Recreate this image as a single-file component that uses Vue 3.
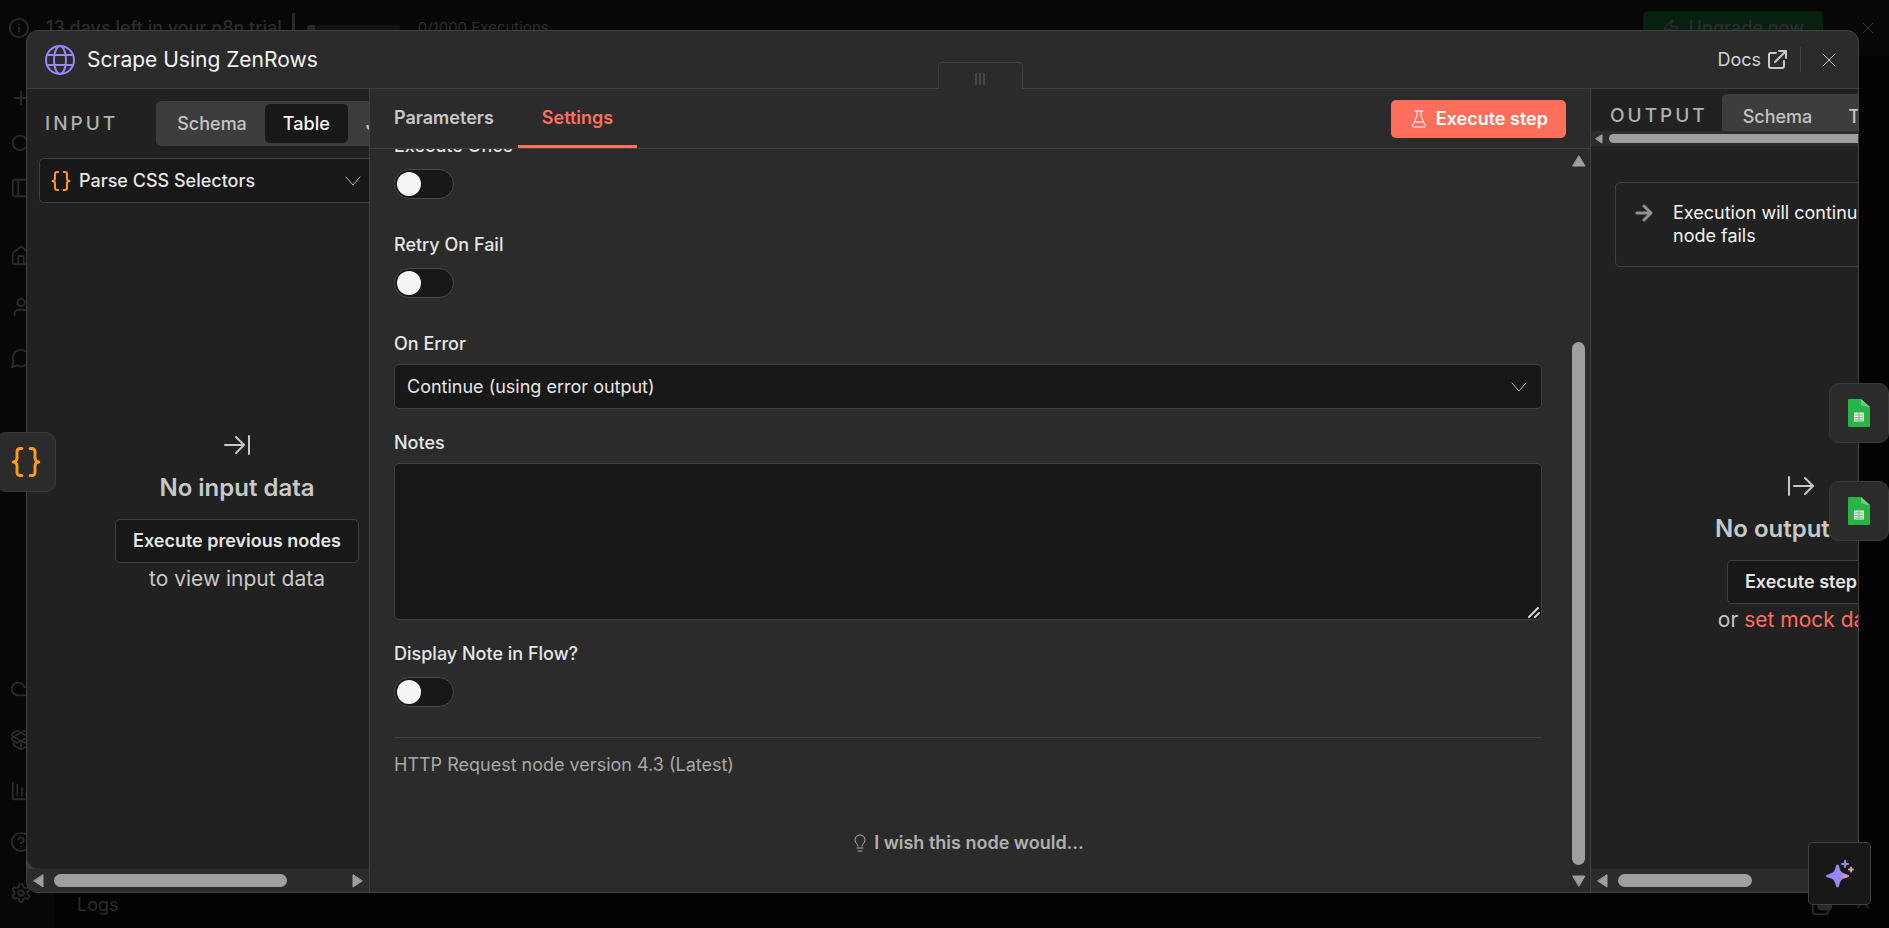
<script setup>
import { ref } from 'vue'

const executeOnce = ref(false)
const retryOnFail = ref(false)
const displayNote = ref(false)
const notes = ref('')

const sideTop = [
  ['M5 12h14', 'M12 5v14'],
  ['M3 12a8 8 0 1 0 16 0a8 8 0 1 0-16 0', 'm21 21-4-4'],
  ['M5 3h14a2 2 0 0 1 2 2v14a2 2 0 0 1-2 2H5a2 2 0 0 1-2-2V5a2 2 0 0 1 2-2', 'M9 3v18'],
]
const sideMid = [
  ['M15 21v-8a1 1 0 0 0-1-1h-4a1 1 0 0 0-1 1v8', 'M3 10a2 2 0 0 1 .7-1.5l7-6a2 2 0 0 1 2.6 0l7 6A2 2 0 0 1 21 10v9a2 2 0 0 1-2 2H5a2 2 0 0 1-2-2z'],
  ['M19 21v-2a4 4 0 0 0-4-4H9a4 4 0 0 0-4 4v2', 'M8 7a4 4 0 1 0 8 0a4 4 0 1 0-8 0'],
  ['M7.9 20A9 9 0 1 0 4 16.1L2 22Z'],
]
const sideLow = [
  ['M17.5 19H9a7 7 0 1 1 6.7-9h1.8a4.5 4.5 0 1 1 0 9Z'],
  ['M12 22v-9', 'M15.2 2.2a1.7 1.7 0 0 1 1.6 0L21 4.6a1.9 1.9 0 0 1 0 3.3L8.8 14.8a1.9 1.9 0 0 1-1.7 0L3 12.4a1.9 1.9 0 0 1 0-3.3z', 'M20 13v3.9a2 2 0 0 1-1 1.7l-6 3.2a2 2 0 0 1-1.9 0l-6-3.2a2 2 0 0 1-1.1-1.7V13', 'M21 12.4a1.9 1.9 0 0 0 0-3.3L8.9 2.2a1.9 1.9 0 0 0-1.7 0L3 4.6a1.9 1.9 0 0 0 0 3.3l12.2 6.9a1.9 1.9 0 0 0 1.7 0z'],
  ['M3 3v16a2 2 0 0 0 2 2h16', 'M8 5v12', 'M13 9v8', 'M18 13v4'],
  ['M2 12a10 10 0 1 0 20 0a10 10 0 1 0-20 0', 'M9.1 9a3 3 0 0 1 5.8 1c0 2-3 3-3 3', 'M12 17h.01'],
  ['M12.2 2h-.4a2 2 0 0 0-2 2v.2a2 2 0 0 1-1 1.7l-.5.3a2 2 0 0 1-2 0l-.1-.1a2 2 0 0 0-2.7.7l-.3.4a2 2 0 0 0 .8 2.7l.1.1a2 2 0 0 1 1 1.7v.5a2 2 0 0 1-1 1.8l-.1.1a2 2 0 0 0-.8 2.7l.3.4a2 2 0 0 0 2.7.7l.1-.1a2 2 0 0 1 2 0l.5.3a2 2 0 0 1 1 1.7v.2a2 2 0 0 0 2 2h.4a2 2 0 0 0 2-2v-.2a2 2 0 0 1 1-1.7l.5-.3a2 2 0 0 1 2 0l.1.1a2 2 0 0 0 2.7-.7l.3-.4a2 2 0 0 0-.8-2.7l-.1-.1a2 2 0 0 1-1-1.7v-.5a2 2 0 0 1 1-1.8l.1-.1a2 2 0 0 0 .8-2.7l-.3-.4a2 2 0 0 0-2.7-.7l-.1.1a2 2 0 0 1-2 0l-.5-.3a2 2 0 0 1-1-1.7V4a2 2 0 0 0-2-2z', 'M9 12a3 3 0 1 0 6 0a3 3 0 1 0-6 0'],
]
const bracePaths = [
  'M9.2 3H8a2 2 0 0 0-2 2v4.500a2.500 2.500 0 0 1-2.500 2.500a2.500 2.500 0 0 1 2.500 2.500v4.500a2 2 0 0 0 2 2h1.200',
  'M14.8 21H16a2 2 0 0 0 2-2v-4.500a2.500 2.500 0 0 1 2.500-2.500a2.500 2.500 0 0 1-2.500-2.500V5a2 2 0 0 0-2-2h-1.200',
]
</script>

<template>
  <div class="page">
    <header class="banner">
      <svg class="ico info" viewBox="0 0 24 24"><circle cx="12" cy="12" r="10" /><path d="M12 16v-4M12 8h.01" /></svg>
      <span class="trial">13 days left in your n8n trial</span>
      <span class="bar"></span>
      <span class="meter"></span>
      <span class="execs">0/1000 Executions</span>
      <button class="upgrade" type="button">
        <svg class="ico" viewBox="0 0 24 24"><path d="M4 14a1 1 0 0 1-.8-1.6l9.9-10.2a.5.5 0 0 1 .9.5l-2 6A1 1 0 0 0 13 10h7a1 1 0 0 1 .8 1.6l-9.9 10.2a.5.5 0 0 1-.9-.5l2-6A1 1 0 0 0 11 14z" /></svg>
        Upgrade now
      </button>
      <button class="banner-close" type="button" aria-label="Dismiss banner">
        <svg class="ico" viewBox="0 0 24 24"><path d="M2 2l20 20M22 2L2 22" /></svg>
      </button>
    </header>
    <div class="below">
      <nav class="sidebar">
        <div class="group top">
          <svg v-for="(p, i) in sideTop" :key="i" class="ico" viewBox="0 0 24 24"><path v-for="d in p" :key="d" :d="d" /></svg>
        </div>
        <div class="group mid">
          <svg v-for="(p, i) in sideMid" :key="i" class="ico" viewBox="0 0 24 24"><path v-for="d in p" :key="d" :d="d" /></svg>
        </div>
        <div class="group low">
          <svg v-for="(p, i) in sideLow" :key="i" class="ico" viewBox="0 0 24 24"><path v-for="d in p" :key="d" :d="d" /></svg>
        </div>
      </nav>
      <div class="canvas">
        <footer class="logs">
          <span>Logs</span>
          <svg class="ico pop" viewBox="0 0 24 24"><rect x="2" y="6" width="17" height="16" rx="3" /><rect x="8" y="3" width="14" height="14" rx="3" fill="#2a2a2a" /></svg>
          <svg class="ico up" viewBox="0 0 24 24"><path d="M4 16l8-8 8 8" /></svg>
        </footer>
      </div>
    </div>

    <section class="modal" role="dialog" aria-label="Scrape Using ZenRows">
      <header class="head">
        <svg class="globe" viewBox="0 0 30 30"><circle cx="15" cy="15" r="14" /><ellipse cx="15" cy="15" rx="6" ry="14" /><path d="M2 10h26M2 20h26" /></svg>
        <h1>Scrape Using ZenRows</h1>
        <a class="docs" href="#">Docs
          <svg viewBox="0 0 20 20"><path d="M9 3H4a2 2 0 0 0-2 2v11a2 2 0 0 0 2 2h11a2 2 0 0 0 2-2v-5M12 1h7v7M19 1L8 12" /></svg>
        </a>
        <span class="split"></span>
        <button class="close" type="button" aria-label="Close">
          <svg viewBox="0 0 14 14"><path d="M1 1l12 12M13 1L1 13" /></svg>
        </button>
        <div class="handle"><i></i><i></i><i></i></div>
      </header>

      <div class="body">
        <aside class="side input">
          <div class="side-view">
            <div class="side-head">
              <h2>INPUT</h2>
              <div class="seg">
                <button type="button">Schema</button>
                <button type="button" class="on">Table</button>
                <button type="button">JSON</button>
              </div>
            </div>
            <div class="node-pick">
              <svg class="braces" viewBox="0 0 24 24"><path v-for="d in bracePaths" :key="d" :d="d" /></svg>
              <select aria-label="Input node"><option>Parse CSS Selectors</option></select>
              <svg class="chev" viewBox="0 0 16 10"><path d="M1 1l7 8 7-8" /></svg>
            </div>
            <div class="empty">
              <svg viewBox="0 0 26 20"><path d="M1 10h19M12 2l8 8-8 8M25 1v18" /></svg>
              <h3>No input data</h3>
              <button type="button">Execute previous nodes</button>
              <p>to view input data</p>
            </div>
          </div>
          <div class="hbar">
            <svg class="arr" viewBox="0 0 11 14"><path d="M10 1v12L1 7z" /></svg>
            <span class="track"><span class="thumb in"></span></span>
            <svg class="arr" viewBox="0 0 11 14"><path d="M1 1v12l9-6z" /></svg>
          </div>
        </aside>

        <main class="main">
          <div class="tabs">
            <button type="button" class="tab">Parameters</button>
            <button type="button" class="tab active">Settings</button>
            <button type="button" class="run">
              <svg viewBox="0 0 16 18"><path d="M4 1h8M6 1v5L2 15a1 1 0 0 0 1 2h10a1 1 0 0 0 1-2L10 6V1M4 12h8" /></svg>
              Execute step
            </button>
          </div>
          <div class="scroller">
            <form class="form" @submit.prevent>
              <div class="field">
                <label for="once">Execute Once</label>
                <input id="once" v-model="executeOnce" type="checkbox" class="toggle" />
              </div>
              <div class="field">
                <label for="retry">Retry On Fail</label>
                <input id="retry" v-model="retryOnFail" type="checkbox" class="toggle" />
              </div>
              <div class="field">
                <label for="onerror">On Error</label>
                <div class="select">
                  <select id="onerror"><option>Continue (using error output)</option></select>
                  <svg class="chev" viewBox="0 0 16 10"><path d="M1 1l7 8 7-8" /></svg>
                </div>
              </div>
              <div class="field">
                <label for="notes">Notes</label>
                <div class="area">
                  <textarea id="notes" v-model="notes"></textarea>
                  <svg class="grip" viewBox="0 0 12 12"><path d="M1 11L10 2M7 11l4-4" /></svg>
                </div>
              </div>
              <div class="field">
                <label for="display">Display Note in Flow?</label>
                <input id="display" v-model="displayNote" type="checkbox" class="toggle" />
              </div>
              <p class="version">HTTP Request node version 4.3 (Latest)</p>
              <a class="wish" href="#">
                <svg viewBox="0 0 12 18"><path d="M4 12c0-2-3-3-3-6a5 5 0 0 1 10 0c0 3-3 4-3 6M3 14h6M4 17h4" /></svg>
                I wish this node would...
              </a>
            </form>
            <div class="vbar">
              <svg viewBox="0 0 16 12"><path d="M2 11h12L8 1z" /></svg>
              <span class="vtrack"><span class="vthumb"></span></span>
              <svg viewBox="0 0 16 12"><path d="M2 1h12L8 11z" /></svg>
            </div>
          </div>
        </main>

        <aside class="side output">
          <div class="side-view">
            <div class="side-head">
              <h2>OUTPUT</h2>
              <div class="seg">
                <button type="button">Schema</button>
                <button type="button">Table</button>
                <button type="button">JSON</button>
              </div>
            </div>
            <div class="minibar">
              <svg viewBox="0 0 8 10"><path d="M7 1v8L1 5z" /></svg>
              <span></span>
            </div>
            <div class="notice">
              <svg viewBox="0 0 18 18"><path d="M2 9h14M9 2l7 7-7 7" /></svg>
              <p>Execution will continue even if the node fails</p>
            </div>
            <div class="empty">
              <svg viewBox="0 0 26 20"><path d="M1 1v18M6 10h19M17 2l8 8-8 8" /></svg>
              <h3>No output data</h3>
              <button type="button">Execute step</button>
              <p>or <a href="#">set mock data</a></p>
            </div>
          </div>
          <div class="hbar">
            <svg class="arr" viewBox="0 0 11 14"><path d="M10 1v12L1 7z" /></svg>
            <span class="track"><span class="thumb out"></span></span>
            <svg class="arr" viewBox="0 0 11 14"><path d="M1 1v12l9-6z" /></svg>
          </div>
        </aside>
      </div>
    </section>

    <button class="float prev" type="button" aria-label="Parse CSS Selectors">
      <svg class="braces" viewBox="0 0 24 24"><path v-for="d in bracePaths" :key="d" :d="d" /></svg>
    </button>
    <div class="next">
      <button v-for="n in 2" :key="n" class="float" type="button" :aria-label="'Google Sheets ' + n">
        <svg class="sheet" viewBox="0 0 22 28">
          <path fill="#28b446" d="M1 0h12l9 8v19a1 1 0 0 1-1 1H1a1 1 0 0 1-1-1V1a1 1 0 0 1 1-1z" />
          <path fill="#6ace7c" d="M13 0l9 8v1l-3-1-6-2z" />
          <path fill="#219b3a" d="M19 8h3v1z" />
          <path fill="#e4e7e6" d="M6 13.500h10v9H6z" />
          <path stroke="#6cc47d" stroke-linecap="butt" d="M7 16h8M7 18.500h8M7 21h8M11 14v8" />
        </svg>
      </button>
    </div>
    <button class="ai" type="button" aria-label="Ask assistant">
      <svg viewBox="0 0 28 28">
        <path fill="#9b85f5" d="M11.500 4.500c1 0 1.400.8 1.700 2 1 4.500 2 6 6.300 7.400 2.400.8 3.500 1.100 3.500 2.100s-1.100 1.300-3.500 2.100c-4.300 1.400-5.300 2.900-6.300 7.400-.3 1.200-.7 2-1.700 2s-1.400-.8-1.700-2c-1-4.500-2-6-6.300-7.400C1.100 17.300 0 17 0 16s1.100-1.300 3.500-2.100c4.300-1.400 5.300-2.900 6.300-7.400.3-1.200.7-2 1.700-2z" />
        <path fill="#e58bb0" d="M16.500 14.500l3.500.2c2 .6 3 .8 3 1.300s-1 .9-3 1.500l-3.500.7z" />
        <path stroke="#9b85f5" stroke-width="2" d="M19 1v6M16 4h6" />
        <path stroke="#d3a5ac" stroke-width="2" d="M25 7.500v4M23 9.500h4" />
      </svg>
    </button>
  </div>
</template>

<style>
html,
body,
#app {
  height: 100%;
  margin: 0;
  background: #030303;
}
</style>

<style scoped>
* {
  box-sizing: border-box;
}
.page {
  position: relative;
  display: flex;
  flex-direction: column;
  height: 100vh;
  overflow: hidden;
  background: #030303;
  color: #e6e6e6;
  font-family: Inter, "Liberation Sans", sans-serif;
  font-size: 18px;
  line-height: 24px;
}
button,
select,
textarea {
  padding: 0;
  border: 0;
  background: none;
  color: inherit;
  font: inherit;
}
h1,
h2,
h3,
p {
  margin: 0;
}
a {
  text-decoration: none;
}
svg {
  flex: none;
  fill: none;
  stroke-linecap: round;
  stroke-linejoin: round;
}
select {
  appearance: none;
  flex: 1;
  min-width: 0;
  outline: 0;
}

/* dimmed application behind the dialog */
.ico {
  width: 22px;
  height: 22px;
  stroke: #2a2a2a;
  stroke-width: 2;
}
.banner {
  display: flex;
  flex: none;
  align-items: center;
  height: 56px;
  padding: 0 15px 0 8px;
  background: #070707;
  color: #2d2d2d;
}
.trial {
  margin-left: 16px;
  font-weight: 500;
}
.bar {
  width: 3px;
  height: 30px;
  margin-left: 10px;
  background: #2a2a2a;
}
.meter {
  width: 93px;
  height: 6px;
  margin: 0 18px 0 12px;
  border-radius: 3px;
  background: linear-gradient(90deg, #2a2a2a 8px, #121212 8px);
}
.execs {
  font-size: 15px;
}
.upgrade {
  display: flex;
  align-items: center;
  gap: 8px;
  height: 34px;
  margin-left: auto;
  padding: 0 19px;
  border-radius: 5px;
  background: #08200f;
  font-weight: 500;
}
.upgrade .ico {
  width: 18px;
  height: 18px;
}
.banner-close {
  display: flex;
  margin-left: 39px;
}
.banner-close .ico {
  width: 12px;
  height: 12px;
  stroke: #3a3a3a;
}
.below {
  display: flex;
  flex: 1;
  min-height: 0;
}
.sidebar {
  display: flex;
  flex-direction: column;
  width: 54px;
  padding: 31px 0 24px 10px;
  background: #070707;
}
.group {
  display: flex;
  flex-direction: column;
}
.top {
  gap: 23px;
}
.mid {
  gap: 29px;
  margin-top: 46px;
}
.low {
  gap: 29px;
  margin-top: auto;
}
.canvas {
  display: flex;
  flex: 1;
  flex-direction: column;
  justify-content: flex-end;
}
.logs {
  display: flex;
  align-items: center;
  height: 46px;
  padding: 0 18px 0 23px;
  color: #2d2d2d;
}
.pop {
  margin-left: auto;
}
.up {
  width: 16px;
  height: 16px;
  margin-left: 22px;
}

/* dialog */
.modal {
  position: absolute;
  inset: 30px 30px 35px 26px;
  display: flex;
  flex-direction: column;
  overflow: hidden;
  border: 1px solid #414141;
  border-radius: 12px;
  background: #2b2b2b;
}
.head {
  position: relative;
  display: flex;
  flex: none;
  align-items: center;
  height: 58px;
  padding: 0 22px 0 18px;
  border-bottom: 1px solid #414141;
}
.globe {
  width: 30px;
  height: 30px;
  stroke: #9b85f5;
  stroke-width: 2;
}
h1 {
  margin-left: 12px;
  color: #f5f5f5;
  font-size: 21px;
  font-weight: 400;
}
.docs {
  display: flex;
  align-items: center;
  gap: 6px;
  margin-left: auto;
  color: #d6d6d6;
}
.docs svg {
  width: 20px;
  height: 20px;
  stroke: #c8c8c8;
  stroke-width: 2;
}
.split {
  width: 1px;
  height: 25px;
  margin: 0 21px 0 13px;
  background: #414141;
}
.close {
  display: flex;
}
.close svg {
  width: 14px;
  height: 14px;
  stroke: #c8c8c8;
  stroke-width: 1;
}
.handle {
  position: absolute;
  top: 31px;
  left: calc(50% - 5px);
  display: flex;
  justify-content: center;
  gap: 2px;
  width: 85px;
  height: 27px;
  padding-top: 10px;
  border: 1px solid #414141;
  border-bottom: 0;
  border-radius: 5px 5px 0 0;
  background: #2b2b2b;
}
.handle i {
  width: 2px;
  height: 12px;
  background: #4a4545;
}
.body {
  display: flex;
  flex: 1;
  min-height: 0;
}

.side {
  display: flex;
  flex: none;
  flex-direction: column;
  overflow: hidden;
  background: #3c3c3c;
}
.input {
  width: 343px;
  border-right: 1px solid #414141;
}
.output {
  width: 268px;
  border-left: 1px solid #414141;
}
.side-view {
  display: flex;
  flex: 1;
  flex-direction: column;
  width: 420px;
  min-height: 0;
  background: #212121;
}
.input .side-view {
  border-radius: 0 0 0 12px;
}
.side-head {
  display: flex;
  flex: none;
  align-items: center;
}
.input .side-head {
  padding: 12px 0 12px 18px;
}
.output .side-head {
  height: 42px;
  padding-left: 19px;
  overflow: hidden;
}
h2 {
  color: #b0b0b0;
  font-size: 19px;
  font-weight: 500;
  letter-spacing: 3px;
}
.output h2 {
  margin-top: 11px;
}
.seg {
  display: flex;
  flex: none;
  gap: 0;
  height: 45px;
  margin-left: 38px;
  padding: 3px;
  border-radius: 5px;
  background: #3d3d3d;
}
.output .seg {
  align-self: flex-start;
  margin: 5px 0 0 14px;
}
.seg button {
  height: 39px;
  padding: 0 18px;
  border-radius: 5px;
  color: #c4c4c4;
  font-weight: 500;
}
.seg .on {
  background: #181818;
  color: #f5f5f5;
}
.node-pick {
  display: flex;
  flex: none;
  align-items: center;
  width: 338px;
  height: 45px;
  margin-left: 12px;
  padding: 0 15px 0 9px;
  border: 1px solid #414141;
  border-radius: 5px;
  background: #181818;
  font-weight: 500;
}
.node-pick select {
  margin-left: 6px;
}
.braces {
  width: 24px;
  height: 24px;
  stroke: #ff9922;
  stroke-width: 2;
}
.chev {
  width: 16px;
  height: 10px;
  stroke: #b8b8b8;
  stroke-width: 1;
  pointer-events: none;
}
.empty {
  display: flex;
  flex: 1;
  flex-direction: column;
  align-items: center;
  justify-content: center;
  color: #c8c8c8;
  font-size: 21px;
}
.input .empty {
  padding-bottom: 46px;
}
.output .empty {
  padding-bottom: 28px;
}
.empty svg {
  width: 26px;
  height: 20px;
  stroke: #c8c8c8;
  stroke-width: 2;
}
h3 {
  margin-top: 18px;
  font-size: 24px;
  font-weight: 600;
  line-height: 30px;
}
.empty button {
  height: 44px;
  margin-top: 16px;
  padding: 0 17px;
  border: 1px solid #414141;
  border-radius: 5px;
  background: #181818;
  color: #e6e6e6;
  font-size: 18px;
  font-weight: 600;
}
.empty p {
  margin-top: 4px;
}
.empty a {
  color: #ff6f5c;
}
.hbar {
  display: flex;
  flex: none;
  align-items: center;
  gap: 10px;
  height: 23px;
  padding: 0 6px;
  background: #2c2c2c;
}
.arr {
  width: 11px;
  height: 14px;
}
.arr path,
.vbar path,
.minibar path {
  fill: #9f9f9f;
  stroke: #9f9f9f;
  stroke-width: 1;
}
.track {
  flex: 1;
}
.thumb {
  display: block;
  width: 81%;
  height: 13px;
  border-radius: 7px;
  background: #9f9f9f;
}
.thumb.out {
  width: 63%;
}
.minibar {
  display: flex;
  flex: none;
  align-items: center;
  gap: 6px;
  height: 15px;
  padding-left: 4px;
  background: #2c2c2c;
}
.minibar svg {
  width: 8px;
  height: 10px;
}
.minibar span {
  flex: 1;
  height: 9px;
  border-radius: 5px;
  background: #9f9f9f;
}
.notice {
  display: flex;
  flex: none;
  align-items: flex-start;
  gap: 20px;
  height: 85px;
  margin: 36px 24px 0;
  padding: 18px 19px;
  border: 1px solid #414141;
  border-radius: 5px;
  color: #f5f5f5;
  line-height: 23px;
}
.notice svg {
  width: 18px;
  height: 18px;
  margin-top: 3px;
  stroke: #909090;
  stroke-width: 3;
}

.main {
  display: flex;
  flex: 1;
  flex-direction: column;
  min-width: 0;
}
.tabs {
  display: flex;
  flex: none;
  align-items: center;
  height: 60px;
  padding: 0 24px 0 0;
  border-bottom: 1px solid #414141;
  font-weight: 600;
}
.tab {
  height: 59px;
  padding: 0 24px;
  border-top: 1px solid transparent;
  border-bottom: 3px solid transparent;
  color: #c8c8c8;
}
.tab.active {
  border-bottom-color: #ff6f5c;
  color: #ff6f5c;
}
.run {
  display: flex;
  align-items: center;
  gap: 9px;
  height: 38px;
  margin-left: auto;
  padding: 0 18px 0 20px;
  border-radius: 5px;
  background: #ff6f5c;
  color: #fff;
}
.run svg {
  width: 16px;
  height: 18px;
  stroke: #fff;
  stroke-width: 1;
}
.scroller {
  display: flex;
  flex: 1;
  min-height: 0;
  overflow: hidden;
}
.form {
  display: flex;
  flex: 1;
  flex-direction: column;
  justify-content: flex-end;
  min-width: 0;
  padding: 0 25px 37px 24px;
}
.field {
  display: flex;
  flex: none;
  flex-direction: column;
  align-items: flex-start;
  margin-bottom: 22px;
}
.field label {
  margin-bottom: 8px;
  font-weight: 500;
}
.toggle {
  appearance: none;
  display: flex;
  align-items: center;
  width: 60px;
  height: 30px;
  margin: 3px 0 12px;
  padding: 0 2px;
  border: 1px solid #4a4a4a;
  border-radius: 15px;
  background: #181818;
}
.toggle::before {
  content: "";
  width: 24px;
  height: 24px;
  border-radius: 50%;
  background: #f5f5f4;
}
.toggle:checked {
  justify-content: flex-end;
}
.select {
  display: flex;
  align-items: center;
  width: 100%;
  height: 45px;
  padding: 0 14px 0 12px;
  border: 1px solid #414141;
  border-radius: 5px;
  background: #181818;
}
.area {
  position: relative;
  width: 100%;
}
textarea {
  display: block;
  width: 100%;
  height: 157px;
  padding: 10px 12px;
  border: 1px solid #414141;
  border-radius: 5px;
  outline: 0;
  background: #181818;
  resize: none;
}
.grip {
  position: absolute;
  right: 2px;
  bottom: 2px;
  width: 12px;
  height: 12px;
  stroke: #d6d6d6;
  stroke-width: 2;
}
.version {
  margin-top: -4px;
  padding-top: 15px;
  border-top: 1px solid #414141;
  color: #a8a8a8;
}
.wish {
  display: flex;
  align-items: center;
  align-self: center;
  gap: 8px;
  margin: 54px 0 0 2px;
  color: #b0b0b0;
  font-weight: 600;
}
.wish svg {
  width: 12px;
  height: 18px;
  stroke: #b0b0b0;
  stroke-width: 1;
}
.vbar {
  display: flex;
  flex: none;
  flex-direction: column;
  align-items: center;
  gap: 10px;
  width: 23px;
  padding: 6px 0 5px;
}
.vbar svg {
  width: 16px;
  height: 12px;
}
.vtrack {
  display: flex;
  flex: 1;
  align-items: flex-end;
}
.vthumb {
  width: 13px;
  height: 76%;
  border-radius: 7px;
  background: #9f9f9f;
}

/* items lying over the dialog */
.float {
  display: flex;
  align-items: center;
  justify-content: center;
  width: 60px;
  height: 60px;
  border: 1px solid #3a3a3a;
  border-radius: 10px;
  background: #2b2b2b;
}
.prev {
  position: absolute;
  top: calc(50% - 32px);
  left: -4px;
}
.prev .braces {
  width: 36px;
  height: 36px;
}
.next {
  position: absolute;
  top: calc(50% - 81px);
  right: 0;
  display: flex;
  flex-direction: column;
  gap: 38px;
}
.sheet {
  width: 22px;
  height: 28px;
}
.ai {
  position: absolute;
  right: 18px;
  bottom: 23px;
  display: flex;
  align-items: center;
  justify-content: center;
  width: 63px;
  height: 63px;
  border: 1px solid #414141;
  border-radius: 5px;
  background: #181818;
}
.ai svg {
  width: 28px;
  height: 28px;
}
</style>
